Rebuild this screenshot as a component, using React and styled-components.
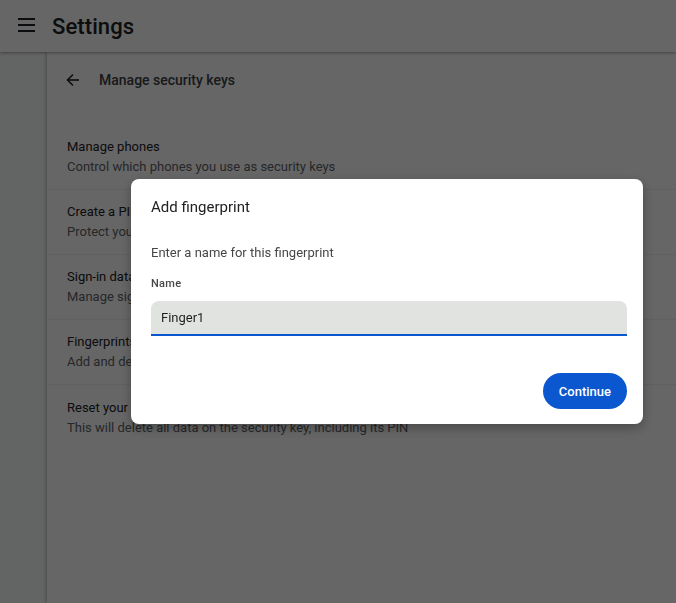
import * as React from 'react'
import styled, { createGlobalStyle } from 'styled-components'

const GlobalStyle = createGlobalStyle`
    html, body {
        margin: 0;
        padding: 0;
        height: 100%;
        overflow: hidden;
        font-family: Roboto, "Liberation Sans", Arial, sans-serif;
        background: #f8f9fa;
        color: #202124;
    }
    #root {
        height: 100%;
    }
`

const Page = styled.div`
    height: 100vh;
    display: flex;
    flex-direction: column;
`

const Toolbar = styled.header`
    height: 52px;
    flex-shrink: 0;
    display: flex;
    align-items: center;
    padding-left: 18px;
    gap: 17px;
    background: #fff;
    box-shadow: 0 1px 3px rgba(0, 0, 0, 0.35);
    position: relative;
    z-index: 1;
`

const MenuButton = styled.div`
    width: 17px;
    height: 14px;
    display: flex;
    flex-direction: column;
    justify-content: space-between;
    margin-top: -2px;

    span {
        display: block;
        height: 2px;
        background: #202124;
    }
`

const Title = styled.h1`
    margin: 0;
    font-size: 22px;
    font-weight: 500;
    letter-spacing: 0.1px;
    color: #202124;
`

const Body = styled.div`
    flex: 1;
    display: flex;
    min-height: 0;
`

const Nav = styled.nav`
    width: 47px;
    flex-shrink: 0;
`

const Card = styled.main`
    flex: 1;
    background: #fff;
    box-shadow: -1px 0 3px rgba(0, 0, 0, 0.25);
`

const SubHeader = styled.div`
    height: 56px;
    display: flex;
    align-items: center;
    padding-left: 18px;
    gap: 18px;
    margin-bottom: 17px;
`

const SubTitle = styled.h2`
    margin: 0;
    font-size: 14px;
    font-weight: 500;
    color: #3c4043;
`

const Row = styled.div`
    height: 65px;
    box-sizing: border-box;
    padding: 12px 20px;
    display: flex;
    flex-direction: column;
    justify-content: center;
    border-bottom: ${p => (p.last ? 'none' : '1px solid rgba(0, 0, 0, 0.06)')};
    font-size: 13px;
    line-height: 20px;
`

const RowTitle = styled.div`
    color: #202124;
`

const RowSub = styled.div`
    color: #5f6368;
`

const Scrim = styled.div`
    position: fixed;
    inset: 0;
    background: rgba(0, 0, 0, 0.6);
    display: flex;
    align-items: center;
    padding-left: 131px;
    z-index: 10;
`

const Dialog = styled.div`
    width: 512px;
    box-sizing: border-box;
    background: #fff;
    border-radius: 8px;
    padding: 16px 16px 15px 20px;
    box-shadow: 0 4px 12px rgba(0, 0, 0, 0.3);
`

const DialogTitle = styled.div`
    font-size: 15px;
    line-height: 24px;
    color: #202124;
    margin-bottom: 24px;
`

const DialogText = styled.div`
    font-size: 13px;
    line-height: 20px;
    color: #474747;
    margin-bottom: 13px;
`

const FieldLabel = styled.div`
    font-size: 11px;
    line-height: 16px;
    font-weight: 500;
    letter-spacing: 0.3px;
    color: #474747;
    margin-bottom: 9px;
`

const Input = styled.input`
    display: block;
    width: 100%;
    height: 35px;
    box-sizing: border-box;
    border: none;
    border-bottom: 2px solid #0b57d0;
    border-radius: 8px 8px 0 0;
    background: #e1e3e1;
    padding: 0 10px;
    font-family: inherit;
    font-size: 13px;
    color: #1f1f1f;
    outline: none;
`

const Actions = styled.div`
    display: flex;
    justify-content: flex-end;
    margin-top: 37px;
`

const PrimaryButton = styled.button`
    height: 36px;
    padding: 0 16px;
    border: none;
    border-radius: 18px;
    background: #0b57d0;
    color: #fff;
    font-family: inherit;
    font-size: 13px;
    font-weight: 500;
    cursor: pointer;
`

const BackArrow = () => (
    <svg width="16" height="16" viewBox="0 0 16 16" fill="none" stroke="#202124" strokeWidth="1.6">
        <path d="M14 8H2.5" />
        <path d="M8 2.5L2.5 8L8 13.5" />
    </svg>
)

const rows = [
    ['Manage phones', 'Control which phones you use as security keys'],
    ['Create a PIN', 'Protect your security key with a PIN (Personal Identification Number)'],
    ['Sign-in data', 'Manage sign-in data stored on your security key'],
    ['Fingerprints', 'Add and delete fingerprints saved on your security key'],
    ['Reset your security key', 'This will delete all data on the security key, including its PIN'],
]

export default function App() {
    return (
        <>
            <GlobalStyle />
            <Page>
                <Toolbar>
                    <MenuButton>
                        <span />
                        <span />
                        <span />
                    </MenuButton>
                    <Title>Settings</Title>
                </Toolbar>
                <Body>
                    <Nav />
                    <Card>
                        <SubHeader>
                            <BackArrow />
                            <SubTitle>Manage security keys</SubTitle>
                        </SubHeader>
                        {rows.map(([title, sub], i) => (
                            <Row key={title} last={i === rows.length - 1}>
                                <RowTitle>{title}</RowTitle>
                                <RowSub>{sub}</RowSub>
                            </Row>
                        ))}
                    </Card>
                </Body>
            </Page>
            <Scrim>
                <Dialog>
                    <DialogTitle>Add fingerprint</DialogTitle>
                    <DialogText>Enter a name for this fingerprint</DialogText>
                    <FieldLabel>Name</FieldLabel>
                    <Input defaultValue="Finger1" />
                    <Actions>
                        <PrimaryButton>Continue</PrimaryButton>
                    </Actions>
                </Dialog>
            </Scrim>
        </>
    )
}
